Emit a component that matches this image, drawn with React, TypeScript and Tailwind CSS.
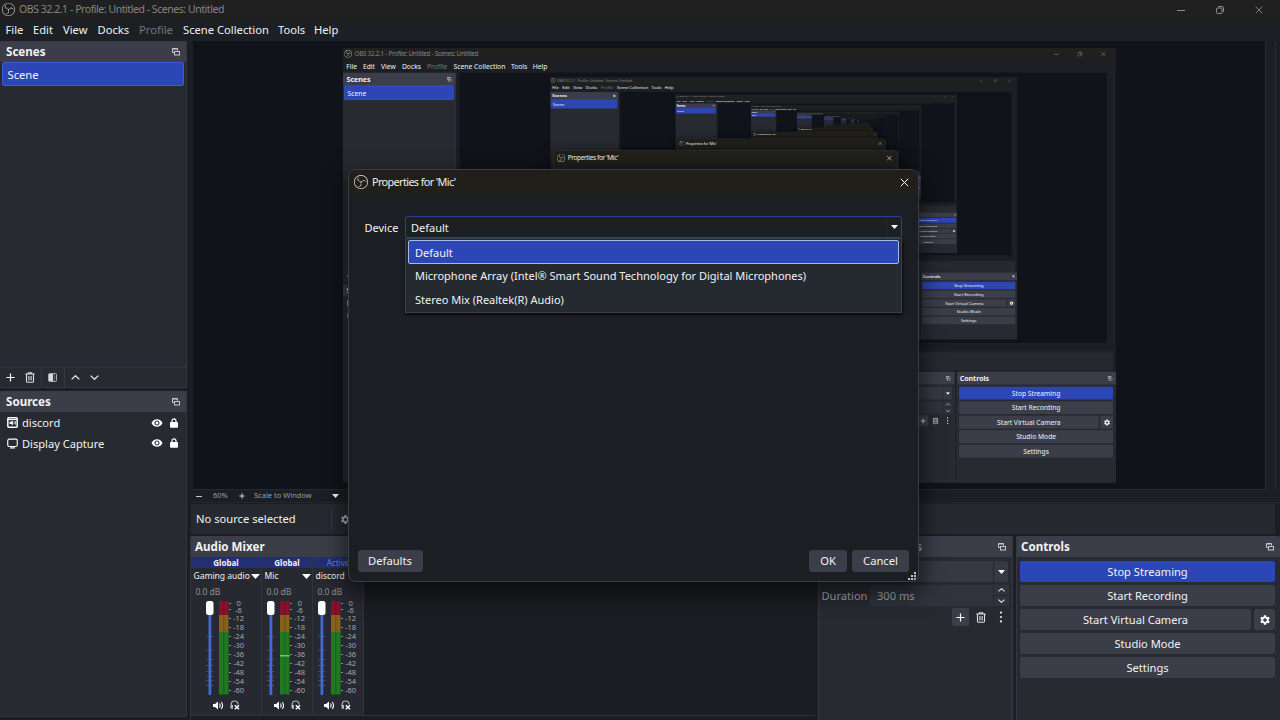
import React from "react";
import { SiObsstudio } from "react-icons/si";
import { MdVisibility, MdSettings } from "react-icons/md";

const MAX_DEPTH = 10;
const TEXT_DEPTH = 5;

function PopOut() {
  return (
    <svg className="h-[8px] w-[8px] shrink-0" viewBox="0 0 8 8" fill="none" stroke="#c6c8ce" strokeWidth="1">
      <path d="M2.5 4.5H0.5V0.5H5.5V2.5" />
      <rect x="2.5" y="3.5" width="5" height="3.5" />
      <path d="M0.5 1H5.5" />
    </svg>
  );
}

function Plus({ className = "h-[9px] w-[9px]" }: { className?: string }) {
  return (
    <svg className={className} viewBox="0 0 10 10" stroke="#fefefe" strokeWidth="1.3">
      <path d="M5 0.5V9.5M0.5 5H9.5" />
    </svg>
  );
}

function Trash() {
  return (
    <svg className="h-[11px] w-[10px]" viewBox="0 0 10 11" fill="none" stroke="#e0e1e4" strokeWidth="1.1">
      <path d="M0.3 2H9.7M3.3 2V0.7H6.7V2M1.5 2V9.2Q1.5 10.3 2.6 10.3H7.4Q8.5 10.3 8.5 9.2V2M3.9 4V8.4M6.1 4V8.4" />
    </svg>
  );
}

function Lock() {
  return (
    <svg className="ml-[7px] h-[10px] w-[8px]" viewBox="0 0 8 10">
      <path d="M2 4.5V3Q2 0.8 4 0.8Q6 0.8 6 3V4.5" fill="none" stroke="#fefefe" strokeWidth="1.2" />
      <rect x="0" y="4" width="8" height="5.8" rx="0.8" fill="#fefefe" />
    </svg>
  );
}

function Chevron({ up = false, className = "h-[5px] w-[9px]" }: { up?: boolean; className?: string }) {
  return (
    <svg className={className} viewBox="0 0 9 5" fill="none" stroke="#e8e8ea" strokeWidth="1.3">
      <path d={up ? "M0.6 4.4L4.5 0.7L8.4 4.4" : "M0.6 0.6L4.5 4.3L8.4 0.6"} />
    </svg>
  );
}

function Caret({ className = "h-[4px] w-[7px]" }: { className?: string }) {
  return (
    <svg className={className} viewBox="0 0 8 5" preserveAspectRatio="none" fill="#fefefe">
      <path d="M0 0H8L4 5Z" />
    </svg>
  );
}

function Close({ className }: { className: string }) {
  return (
    <svg className={className} viewBox="0 0 10 10" fill="none" stroke="currentColor" strokeWidth="1.1">
      <path d="M0.8 0.8L9.2 9.2M9.2 0.8L0.8 9.2" />
    </svg>
  );
}

function TitleBar() {
  return (
    <div className="flex h-[20px] shrink-0 items-center bg-[#202020] pb-px pl-[2px] text-[#858585]">
      <SiObsstudio className="h-[13px] w-[13px] text-[#d0d0d0]" />
      <span className="ml-[4px] text-[10.5px] leading-none tracking-[-0.45px] whitespace-nowrap">
        OBS 32.2.1 - Profile: Untitled - Scenes: Untitled
      </span>
      <div className="ml-auto flex items-center pr-[17.5px] text-[#8c8c8c]">
        <svg className="h-[8px] w-[8px]" viewBox="0 0 8 8" stroke="currentColor">
          <path d="M0 4.5H8" />
        </svg>
        <svg className="ml-[31px] h-[8px] w-[8px]" viewBox="0 0 8 8" fill="none" stroke="currentColor">
          <rect x="0.5" y="2" width="5.5" height="5.5" rx="1" />
          <path d="M2.2 0.5H6.2Q7.5 0.5 7.5 1.8V5.8" />
        </svg>
        <Close className="ml-[31px] h-[8px] w-[8px]" />
      </div>
    </div>
  );
}

function MenuBar() {
  return (
    <div className="flex h-[21px] shrink-0 items-center bg-[#1c2024] pb-px pl-[5.5px] text-[11.2px] leading-none whitespace-nowrap">
      <span className="w-[27.5px]">File</span>
      <span className="w-[30px]">Edit</span>
      <span className="w-[34.5px]">View</span>
      <span className="w-[41.5px]">Docks</span>
      <span className="w-[44px] text-[#73767c]">Profile</span>
      <span className="w-[95px]">Scene Collection</span>
      <span className="w-[36px]">Tools</span>
      <span>Help</span>
    </div>
  );
}

function DockHeader({ title, hide = false, pad = "pl-[4px]" }: { title: string; hide?: boolean; pad?: string }) {
  return (
    <div className={`flex h-[21px] shrink-0 items-center justify-between rounded-t-[2px] bg-[#3b3e49] pr-[6px] ${pad}`}>
      <span className="text-[11.6px] leading-none font-bold whitespace-nowrap">{title}</span>
      {!hide && <PopOut />}
    </div>
  );
}

function SourceRow({ name, kind }: { name: string; kind: "audio" | "display" }) {
  return (
    <div className="flex h-[20.5px] items-center pr-[8px] pl-[7px]">
      {kind === "audio" ? (
        <svg className="h-[11px] w-[11px]" viewBox="0 0 12 12">
          <rect x="0.9" y="0.9" width="10.2" height="10.2" rx="1" fill="none" stroke="#fefefe" strokeWidth="1.6" />
          <path d="M1 2.8H11" stroke="#fefefe" strokeWidth="1.2" />
          <path d="M2.8 5.2V7.6H4.4L6.4 9V3.9L4.4 5.2Z" fill="#fefefe" />
          <path d="M7.8 5V7.8M9.2 4.4V8.4" stroke="#fefefe" strokeWidth="0.8" />
        </svg>
      ) : (
        <svg className="h-[11px] w-[11px]" viewBox="0 0 12 12" fill="none" stroke="#fefefe" strokeWidth="1.2">
          <rect x="0.8" y="1.2" width="10.4" height="8" rx="1.6" />
          <path d="M3.4 10.8H8.6" strokeWidth="1.4" />
        </svg>
      )}
      <span className="ml-[4px] text-[11.1px] leading-none whitespace-nowrap">{name}</span>
      <MdVisibility className="ml-auto h-[12px] w-[12px] text-white" />
      <Lock />
    </div>
  );
}

function LeftColumn() {
  return (
    <div className="flex w-[187px] shrink-0 flex-col">
      <div className="flex h-[347px] flex-col border-r border-b border-[#33363f] bg-[#272a31]">
        <DockHeader title="Scenes" pad="pl-[6px]" />
        <div className="mx-[2px] flex h-[24px] items-center rounded-[2px] border border-[#3c5cd0] bg-[#2c47b5] pt-px pl-[4.5px] text-[11.2px] leading-none">
          Scene
        </div>
        <div className="mt-auto flex h-[20px] items-center border-t border-[#30333b] pl-[6px]">
          <Plus />
          <div className="ml-[10px] flex">
            <Trash />
          </div>
          <div className="ml-[6px] h-[19px] w-px bg-[#343740]" />
          <svg className="ml-[6px] h-[9px] w-[9px]" viewBox="0 0 9 9">
            <rect x="0.5" y="0.5" width="8" height="8" rx="1" fill="#33363e" stroke="#a9abb2" />
            <rect x="1" y="1" width="4" height="7" fill="#d8d9dd" />
            <path d="M6.5 1.5V8" stroke="#7b7e87" strokeDasharray="1 1" />
          </svg>
          <div className="ml-[7px] h-[19px] w-px bg-[#343740]" />
          <Chevron up className="ml-[6px] h-[5px] w-[9px]" />
          <Chevron className="ml-[10px] h-[5px] w-[9px]" />
        </div>
      </div>
      <div className="mt-[3px] flex h-[326px] flex-col border-r border-b border-[#33363f] bg-[#272a31]">
        <DockHeader title="Sources" pad="pl-[6px]" />
        <div className="pt-[0.5px]">
          <SourceRow name="discord" kind="audio" />
          <SourceRow name="Display Capture" kind="display" />
        </div>
      </div>
    </div>
  );
}

const DB_MARKS = ["-12", "-18", "-24", "-30", "-36", "-42", "-48", "-54", "-60"];
const GROOVE_TICKS = [35, 49, 58, 64, 70, 75, 79, 84];
const METER_TICKS = [2, 8, 17, 26, 35, 44, 53, 62, 71, 80, 89];

function Fader({ peak, inset }: { peak: boolean; inset: string }) {
  return (
    <div className={`flex h-[96px] ${inset}`}>
      <svg className="h-[96px] w-[26px] shrink-0" viewBox="0 0 26 96">
        {GROOVE_TICKS.map((y) => (
          <path key={y} d={`M1 ${y}.5H8.5`} stroke="#414b72" strokeWidth="1" />
        ))}
        <rect x="3.5" y="2" width="2.8" height="92" fill="#4569d4" />
        <rect x="1" y="0" width="7.5" height="14" rx="2.5" fill="#fefefe" />
        <rect x="14" y="0" width="9.5" height="14" fill="#86112c" />
        <rect x="14" y="14" width="9.5" height="17" fill="#87611c" />
        <rect x="14" y="31" width="9.5" height="62.5" fill="#1f7a20" />
        <path d="M18.8 0V93.5" stroke="#14171b" strokeOpacity="0.35" strokeWidth="0.8" />
        {peak && <rect x="14" y="54" width="9.5" height="1.5" fill="#4be04b" />}
        {METER_TICKS.map((y) => (
          <path key={y} d={`M24 ${y}.5H26`} stroke="#8d9097" strokeWidth="1" />
        ))}
      </svg>
      <div className="flex w-[15px] flex-col text-center text-[7.5px] leading-[9px] tracking-[-0.1px] text-[#a6a8ad]">
        <span className="h-[6px] leading-[5px]">0</span>
        <span className="h-[7px] leading-[6px]">-6</span>
        {DB_MARKS.map((m) => (
          <span key={m} className="h-[9px]">
            {m}
          </span>
        ))}
      </div>
    </div>
  );
}

function Strip({
  group,
  name,
  active,
  arrow,
  peak,
  width,
  inset,
  iconInset,
}: {
  group: string;
  name: string;
  active: boolean;
  arrow: boolean;
  peak: boolean;
  width: string;
  inset: string;
  iconInset: string;
}) {
  return (
    <div className={`flex shrink-0 flex-col border-r border-[#31343d] ${width}`}>
      <div
        className={`flex h-[11px] items-center justify-center bg-[#222f72] text-[8px] leading-none whitespace-nowrap ${active ? "text-[#6f82d8]" : "font-bold"}`}
      >
        {group}
      </div>
      <div className="flex h-[16px] items-center justify-between pr-px pl-[2.5px] text-[8.5px] leading-none whitespace-nowrap">
        {name}
        {arrow && <Caret className="h-[5px] w-[9px]" />}
      </div>
      <div className="flex h-[17px] items-center pb-px pl-[4.5px] text-[8.6px] leading-none tracking-[-0.1px] text-[#8d9096]">
        0.0 dB
      </div>
      <Fader peak={peak} inset={inset} />
      <div className={`mt-[3px] flex items-center gap-[6px] ${iconInset}`}>
        <svg className="h-[9px] w-[11px]" viewBox="0 0 11 9">
          <path d="M0 3H2L5 0.5V8.5L2 6H0Z" fill="#fefefe" />
          <path d="M6.5 2.5Q7.8 4.5 6.5 6.5M8.3 1Q10.8 4.5 8.3 8" fill="none" stroke="#fefefe" strokeWidth="1.1" />
        </svg>
        <svg className="h-[10px] w-[10px]" viewBox="0 0 10 10" fill="none">
          <path d="M1.2 8V4.4Q1.2 1 4.6 1Q8 1 8 4.4" stroke="#b5b7bc" strokeWidth="1.2" />
          <path d="M0.8 5H3V8.8H0.8Z" fill="#b5b7bc" />
          <path d="M4.8 5.2L9 9.2M9 5.2L4.8 9.2" stroke="#fefefe" strokeWidth="1.5" />
        </svg>
      </div>
    </div>
  );
}

function AudioMixer({ depth }: { depth: number }) {
  return (
    <div className="flex w-[625px] shrink-0 flex-col border-l border-[#30333b] bg-[#1a1d21]">
      <DockHeader title="Audio Mixer" hide />
      <div className="flex h-[159px] border-b border-[#30333b]">
        {depth === 0 && (
          <div className="flex bg-[#262930]">
            <Strip group="Global" name="Gaming audio" active={false} arrow peak={false} width="w-[71px]" inset="pl-[14px]" iconInset="pl-[22px]" />
            <Strip group="Global" name="Mic" active={false} arrow peak width="w-[51px]" inset="pl-[4px]" iconInset="pl-[12px]" />
            <Strip group="Active" name="discord" active arrow={false} peak={false} width="w-[51px]" inset="pl-[4px]" iconInset="pl-[11px]" />
          </div>
        )}
      </div>
    </div>
  );
}

function Transitions() {
  return (
    <div className="flex w-[195px] shrink-0 flex-col border-x border-[#353840] bg-[#272a31]">
      <div className="flex h-[21px] items-center bg-[#3b3e49] pr-[6px]">
        <span className="w-[103px] text-right text-[11.6px] leading-none font-bold text-[#9a9ca3]">s</span>
        <div className="ml-auto">
          <PopOut />
        </div>
      </div>
      <div className="mx-[4px] mt-[4px] flex h-[21px] justify-end rounded-[2px] bg-[#363943]">
        <div className="flex w-[15px] items-center justify-center border-l border-[#24272e]">
          <Caret />
        </div>
      </div>
      <div className="mt-[3px] flex h-[21px] items-center pr-[3px] pl-[2.5px] text-[11.1px] leading-none text-[#a5a7ab]">
        <span className="w-[48.5px]">Duration</span>
        <div className="flex h-full grow items-center rounded-[2px] bg-[#30333c] pl-[7px]">
          300 ms
          <div className="ml-auto flex h-full w-[16px] flex-col items-center justify-between border-l border-[#24272e] py-[3px]">
            <Chevron up className="h-[4px] w-[7px]" />
            <div className="h-px w-full bg-[#24272e]" />
            <Chevron className="h-[4px] w-[7px]" />
          </div>
        </div>
      </div>
      <div className="mt-[2px] flex items-center justify-end pr-[8px]">
        <div className="flex h-[18px] w-[17px] items-center justify-center rounded-[2px] bg-[#3b3e49]">
          <Plus />
        </div>
        <div className="ml-[7px]">
          <Trash />
        </div>
        <svg className="ml-[12px] h-[12px] w-[6px]" viewBox="0 0 6 12" fill="#e6e7ea">
          <circle cx="3" cy="1.6" r="1.1" />
          <circle cx="3" cy="6" r="1.1" />
          <circle cx="3" cy="10.4" r="1.1" />
        </svg>
      </div>
    </div>
  );
}

function ControlButton({ label, primary = false }: { label: string; primary?: boolean }) {
  return (
    <div
      className={`flex h-[21px] grow items-center justify-center rounded-[2px] text-[11.1px] leading-none whitespace-nowrap ${primary ? "bg-[#2c47b5]" : "bg-[#3b3e49]"}`}
    >
      {label}
    </div>
  );
}

function Controls() {
  return (
    <div className="flex w-[264px] shrink-0 flex-col border-l border-[#353840] bg-[#272a31]">
      <DockHeader title="Controls" />
      <div className="flex flex-col gap-[3px] pt-[4px] pr-[5px] pl-[3px]">
        <div className="flex">
          <ControlButton label="Stop Streaming" primary />
        </div>
        <div className="flex">
          <ControlButton label="Start Recording" />
        </div>
        <div className="flex gap-[3px]">
          <ControlButton label="Start Virtual Camera" />
          <div className="flex h-[21px] w-[21px] items-center justify-center rounded-[2px] bg-[#3b3e49]">
            <MdSettings className="h-[12px] w-[12px] text-white" />
          </div>
        </div>
        <div className="flex">
          <ControlButton label="Studio Mode" />
        </div>
        <div className="flex">
          <ControlButton label="Settings" />
        </div>
      </div>
    </div>
  );
}

function DialogButton({ label, width }: { label: string; width: string }) {
  return (
    <div className={`flex h-[22px] items-center justify-center rounded-[3px] bg-[#3b3e49] text-[11.2px] leading-none ${width}`}>
      {label}
    </div>
  );
}

function DeviceForm() {
  return (
    <>
      <div className="relative mt-[22px] flex h-[22px] items-center pl-[15.5px] text-[11px] leading-none">
        <span className="w-[40.5px]">Device</span>
        <div className="flex h-[22px] w-[497px] items-center justify-between rounded-[2px] border border-[#2d3f8c] bg-[#1c1f24] pl-[5px]">
          Default
          <div className="flex h-full w-[15px] items-center justify-center border-l border-[#262a33]">
            <Caret />
          </div>
        </div>
        <div className="absolute top-[22px] left-[56px] flex w-[497px] flex-col border border-[#3a3e4a] bg-[#252930] px-[2px] pt-px pb-px shadow-[1px_2px_3px_rgba(0,0,0,0.7)]">
          <div className="flex h-[24px] items-center rounded-[2px] border border-[#a9b6ea] bg-[#2c47b5] pl-[6px]">Default</div>
          <div className="flex h-[23px] items-center pl-[7px] whitespace-nowrap">
            Microphone Array (Intel® Smart Sound Technology for Digital Microphones)
          </div>
          <div className="flex h-[24px] items-center pl-[7px]">Stereo Mix (Realtek(R) Audio)</div>
        </div>
      </div>
      <div className="mt-auto flex items-center pr-[9px] pb-[9px] pl-[8.5px]">
        <DialogButton label="Defaults" width="w-[65px]" />
        <DialogButton label="OK" width="w-[38px] ml-auto" />
        <DialogButton label="Cancel" width="w-[57px] ml-[5px]" />
      </div>
      <svg className="absolute right-[2px] bottom-[1px] h-[8px] w-[8px]" viewBox="0 0 8 8" fill="#c4c6ca">
        <path d="M6 0H8V2H6ZM3 3H5V5H3ZM6 3H8V5H6ZM0 6H2V8H0ZM3 6H5V8H3ZM6 6H8V8H6Z" />
      </svg>
    </>
  );
}

function PropertiesDialog({ depth }: { depth: number }) {
  return (
    <div className="absolute top-[169px] left-[348px] flex h-[413px] w-[571px] flex-col overflow-hidden rounded-[8px] border border-[#3b3d40] bg-[#1b1e22]">
      <div className="flex h-[24px] shrink-0 items-center bg-[#211f19] pr-[9px] pl-[5px]">
        <SiObsstudio className="h-[14px] w-[14px] text-[#e8e8e8]" />
        {depth < TEXT_DEPTH && (
          <span className="ml-[4px] text-[10.8px] leading-none tracking-[-0.6px] whitespace-nowrap text-[#f0f0f0]">
            Properties for 'Mic'
          </span>
        )}
        <Close className="ml-auto h-[9px] w-[9px] text-white" />
      </div>
      {depth === 0 && <DeviceForm />}
    </div>
  );
}

function Preview({ depth }: { depth: number }) {
  return (
    <div className="flex">
      <div className="flex h-[449px] w-[1073px] items-center justify-center overflow-hidden border-r border-b border-[#262a30] bg-[#10131a]">
        {depth < MAX_DEPTH && (
          <div className="h-[435px] w-[773px] shrink-0 overflow-hidden">
            <div className="h-[720px] w-[1280px] origin-top-left scale-[0.604]">
              {depth + 1 < TEXT_DEPTH ? <StudioWindow depth={depth + 1} /> : <MiniWindow depth={depth + 1} />}
            </div>
          </div>
        )}
      </div>
      <div className="h-[449px] w-[10px] border-r border-[#292c33]" />
    </div>
  );
}

/* Text-free window for levels of the feedback loop too small to read. */
function MiniWindow({ depth }: { depth: number }) {
  return (
    <div className="relative flex h-[720px] w-[1280px] flex-col overflow-hidden bg-[#1b1e22]">
      <div className="h-[20px] shrink-0 bg-[#202020]" />
      <div className="flex h-[21px] shrink-0 items-center gap-[11px] pl-[6px]">
        <div className="h-[6px] w-[120px] bg-[#8c8e92]" />
        <div className="h-[6px] w-[190px] bg-[#8c8e92]" />
      </div>
      <div className="flex grow">
        <div className="w-[187px] shrink-0 bg-[#272a31]">
          <div className="h-[21px] bg-[#3b3e49]" />
          <div className="h-[24px] bg-[#2c47b5]" />
        </div>
        <div className="ml-[6px] grow">
          <Preview depth={depth} />
        </div>
      </div>
      <PropertiesDialog depth={depth} />
    </div>
  );
}

function StudioWindow({ depth }: { depth: number }) {
  return (
    <div className="relative flex h-[720px] w-[1280px] flex-col overflow-hidden bg-[#1b1e22] text-[#f2f2f3]">
      <TitleBar />
      <MenuBar />
      <div className="flex min-h-0 grow">
        <LeftColumn />
        <div className="flex grow flex-col">
          <div className="ml-[6px]">
            <Preview depth={depth} />
          </div>
          <div className="ml-[6px] flex h-[13px] items-center border-b border-[#23262b] text-[7.5px] leading-none whitespace-nowrap text-[#9a9ca1]">
            <div className="ml-[3px] h-px w-[6px] bg-[#c8c9cc]" />
            <span className="ml-[11px] w-[25px]">60%</span>
            <Plus className="ml-[1px] h-[6px] w-[6px]" />
            <span className="ml-[9px] w-[78px]">Scale to Window</span>
            <Caret />
          </div>
          <div className="mt-px ml-[4px] flex h-[30px] w-[1084px] items-center bg-[#262930] pl-[5px] text-[11.2px] leading-none">
            <span className="w-[135px] whitespace-nowrap">No source selected</span>
            <div className="h-[22px] w-px bg-[#373a43]" />
            <MdSettings className="ml-[8px] h-[11px] w-[11px] text-[#b0b2b7]" />
          </div>
          <div className="mt-[2px] ml-[3px] flex grow gap-[3px]">
            <AudioMixer depth={depth} />
            <Transitions />
            <Controls />
          </div>
        </div>
      </div>
      <div className="absolute top-[169px] left-[348px] h-[413px] w-[571px] rounded-[8px] shadow-[0_8px_22px_4px_rgba(0,0,0,0.55)]" />
      <PropertiesDialog depth={depth} />
    </div>
  );
}

export default function App() {
  return (
    <div className="h-[720px] w-[1280px] overflow-hidden font-['Noto_Sans',sans-serif]">
      <StudioWindow depth={0} />
    </div>
  );
}
